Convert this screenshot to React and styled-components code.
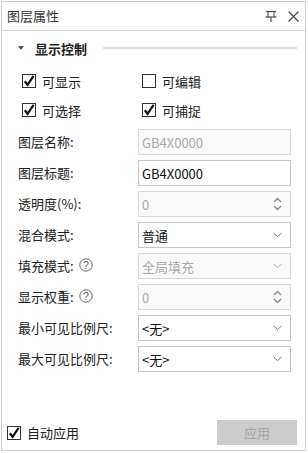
import React from "react";
import styled, { createGlobalStyle } from "styled-components";

const Global = createGlobalStyle`
  html, body { margin: 0; padding: 0; background: #fff; }
  body { font-family: "Noto Sans CJK SC", "Noto Sans", sans-serif; font-size: 13px; color: #222; }
`;

const Page = styled.div`
  padding: 1px 2px 2px 1px;
  width: 308px;
  height: 453px;
  box-sizing: border-box;
`;

const Panel = styled.div`
  width: 305px;
  height: 450px;
  box-sizing: border-box;
  border: 1px solid #cfcfcf;
  display: flex;
  flex-direction: column;
  background: #fff;
`;

const TitleBar = styled.div`
  height: 28px;
  border-bottom: 1px solid #d4d4d4;
  display: flex;
  align-items: center;
  padding: 0 6px 0 5px;
  gap: 10px;
`;

const Title = styled.div`
  flex: 1;
  font-size: 13px;
  color: #333;
  margin-top: -2px;
`;

const IconBtn = styled.span`
  display: inline-flex;
  width: 12px;
  height: 12px;
  align-items: center;
  justify-content: center;
`;

const Content = styled.div`
  flex: 1;
  display: flex;
  flex-direction: column;
  padding: 8px 13px 0 0;
`;

const SectionHeader = styled.div`
  display: flex;
  align-items: center;
  height: 18px;
  padding-left: 16px;
`;

const Triangle = styled.span`
  width: 0;
  height: 0;
  border-left: 3px solid transparent;
  border-right: 3px solid transparent;
  border-top: 4px solid #555;
  margin-right: 11px;
`;

const SectionTitle = styled.span`
  font-weight: bold;
  font-size: 13px;
  color: #222;
`;

const SectionLine = styled.span`
  flex: 1;
  height: 2px;
  background: #dcdcdc;
  margin-left: 16px;
  margin-right: -5px;
`;

const CheckGrid = styled.div`
  display: grid;
  grid-template-columns: 120px 120px;
  grid-auto-rows: 24px;
  row-gap: 5px;
  padding-left: 20px;
  margin-top: 12px;
`;

const CheckLabel = styled.label`
  display: flex;
  align-items: center;
  gap: 6px;
  color: #222;
  font-size: 13px;
`;

const Form = styled.div`
  display: flex;
  flex-direction: column;
  gap: 5px;
  margin-top: 7px;
  padding-left: 16px;
`;

const Row = styled.div`
  display: grid;
  grid-template-columns: 120px 153px;
  align-items: center;
  height: 26px;
`;

const Label = styled.div`
  display: flex;
  align-items: center;
  gap: 5px;
  color: #222;
  font-size: 13px;
  margin-top: -2px;
`;

const Field = styled.div`
  height: 26px;
  box-sizing: border-box;
  border: 1px solid ${p => (p.$disabled ? "#d8d8d8" : "#c6c6c6")};
  background: ${p => (p.$disabled ? "#fafafa" : "#fff")};
  color: ${p => (p.$disabled ? "#a9a9a9" : "#111")};
  display: flex;
  align-items: center;
  padding: 0 8px 0 3px;
  font-size: 13px;
`;

const FieldText = styled.span`
  flex: 1;
`;

const Footer = styled.div`
  display: flex;
  align-items: center;
  justify-content: space-between;
  padding: 0 8px 5px 5px;
  height: 25px;
`;

const ApplyButton = styled.div`
  width: 80px;
  height: 25px;
  background: #cccccc;
  color: #a3a3a3;
  display: flex;
  align-items: center;
  justify-content: center;
  font-size: 13px;
`;

const CheckBox = ({ checked }) => (
  <svg width="14" height="14" viewBox="0 0 14 14">
    <rect x="0.5" y="0.5" width="13" height="13" fill="#fff" stroke="#333" />
    {checked && (
      <path d="M2.8 7.2 L5.6 10.8 L11.6 1.8" fill="none" stroke="#111" strokeWidth="2.2" strokeLinejoin="miter" />
    )}
  </svg>
);

const Chevron = ({ disabled }) => (
  <svg width="9" height="6" viewBox="0 0 9 6">
    <path d="M0.5 1 L4.5 4.5 L8.5 1" fill="none" stroke={disabled ? "#b0b0b0" : "#777"} strokeWidth="1" />
  </svg>
);

const Spinner = () => (
  <svg width="9" height="16" viewBox="0 0 9 16">
    <path d="M1 6 L4.5 2.5 L8 6" fill="none" stroke="#888" strokeWidth="1.4" />
    <path d="M1 10 L4.5 13.5 L8 10" fill="none" stroke="#888" strokeWidth="1.4" />
  </svg>
);

const Help = () => (
  <svg width="14" height="14" viewBox="0 0 14 14">
    <circle cx="7" cy="7" r="6.2" fill="none" stroke="#666" strokeWidth="1" />
    <text x="7" y="10.6" textAnchor="middle" fontSize="10" fill="#555" fontFamily="Liberation Sans, sans-serif">?</text>
  </svg>
);

const Pin = () => (
  <svg width="12" height="12" viewBox="0 0 12 12">
    <path d="M1 1.5 H11" stroke="#444" strokeWidth="1.2" />
    <path d="M3 1.5 V7 M9 1.5 V7" stroke="#444" strokeWidth="1" />
    <path d="M0.5 7 H11.5" stroke="#444" strokeWidth="1.2" />
    <path d="M6 7 V12" stroke="#777" strokeWidth="1.6" />
  </svg>
);

const Close = () => (
  <svg width="11" height="11" viewBox="0 0 11 11">
    <path d="M0.5 0.5 L10.5 10.5 M10.5 0.5 L0.5 10.5" stroke="#444" strokeWidth="1.1" />
  </svg>
);

const rows = [
  { label: "图层名称:", value: "GB4X0000", disabled: true },
  { label: "图层标题:", value: "GB4X0000" },
  { label: "透明度(%):", value: "0", disabled: true, kind: "spin" },
  { label: "混合模式:", value: "普通", kind: "select" },
  { label: "填充模式:", value: "全局填充", disabled: true, kind: "select", help: true },
  { label: "显示权重:", value: "0", disabled: true, kind: "spin", help: true },
  { label: "最小可见比例尺:", value: "<无>", kind: "select" },
  { label: "最大可见比例尺:", value: "<无>", kind: "select" },
];

export default function App() {
  return (
    <Page>
      <Global />
      <Panel>
        <TitleBar>
          <Title>图层属性</Title>
          <IconBtn><Pin /></IconBtn>
          <IconBtn><Close /></IconBtn>
        </TitleBar>
        <Content>
          <SectionHeader>
            <Triangle />
            <SectionTitle>显示控制</SectionTitle>
            <SectionLine />
          </SectionHeader>
          <CheckGrid>
            <CheckLabel><CheckBox checked />可显示</CheckLabel>
            <CheckLabel><CheckBox />可编辑</CheckLabel>
            <CheckLabel><CheckBox checked />可选择</CheckLabel>
            <CheckLabel><CheckBox checked />可捕捉</CheckLabel>
          </CheckGrid>
          <Form>
            {rows.map((r, i) => (
              <Row key={i}>
                <Label>
                  {r.label}
                  {r.help && <Help />}
                </Label>
                <Field $disabled={r.disabled}>
                  <FieldText>{r.value}</FieldText>
                  {r.kind === "select" && <Chevron disabled={r.disabled} />}
                  {r.kind === "spin" && <Spinner />}
                </Field>
              </Row>
            ))}
          </Form>
        </Content>
        <Footer>
          <CheckLabel><CheckBox checked />自动应用</CheckLabel>
          <ApplyButton>应用</ApplyButton>
        </Footer>
      </Panel>
    </Page>
  );
}
